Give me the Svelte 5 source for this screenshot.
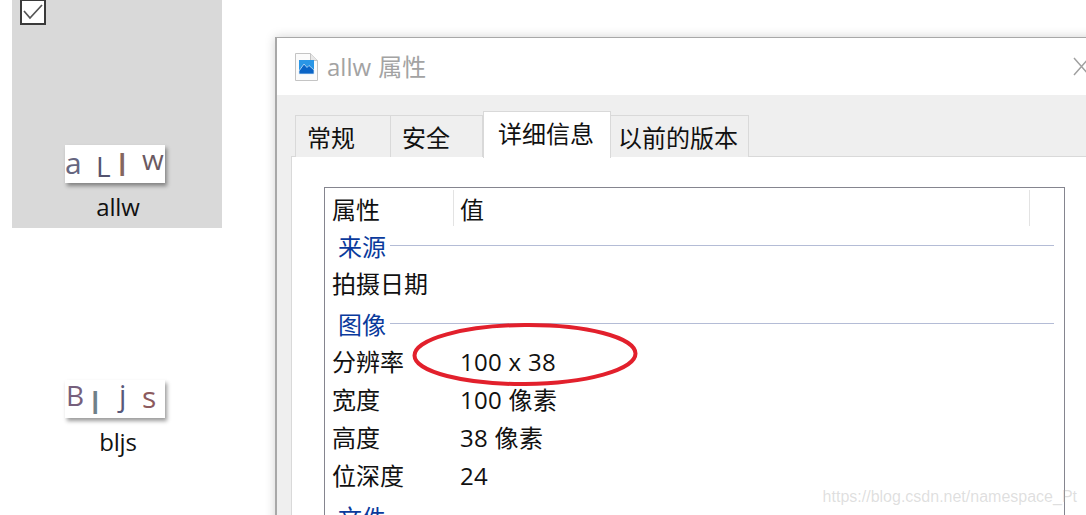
<script lang="ts">
	const tabs = [
		{ label: '常规', width: 96, pad: 11 },
		{ label: '安全', width: 92, pad: 11 },
		{ label: '详细信息', width: 128, pad: 14, active: true },
		{ label: '以前的版本', width: 138, pad: 7 }
	];

	const rows = [
		{ group: '来源' },
		{ name: '拍摄日期', value: '', tall: true },
		{ group: '图像' },
		{ name: '分辨率', value: '100 x 38' },
		{ name: '宽度', value: '100 像素' },
		{ name: '高度', value: '38 像素' },
		{ name: '位深度', value: '24' },
		{ group: '文件' }
	];

	const allw = [
		{ ch: 'a', x: 0, y: -1, size: 30, color: '#66667f' },
		{ ch: 'L', x: 31, y: 2, size: 28, color: '#53536f' },
		{ ch: 'l', x: 53, y: 1, size: 30, color: '#84665f' },
		{ ch: 'w', x: 77, y: -5, size: 28, color: '#6b5a62' }
	];

	const bljs = [
		{ ch: 'B', x: 1, y: -4, size: 28, color: '#76607c' },
		{ ch: 'l', x: 26, y: 4, size: 30, color: '#6f8088' },
		{ ch: 'j', x: 54, y: -4, size: 29, color: '#58587a' },
		{ ch: 's', x: 77, y: -2, size: 30, color: '#8c5a5e' }
	];
</script>

<div class="page">
	<div class="files">
		<div class="tile selected">
			<span class="check">
				<svg width="22" height="22" viewBox="0 0 22 22"><path d="M2 10 L8 17 L20 4" fill="none" stroke="#555" stroke-width="1.7" /></svg>
			</span>
			<div class="thumb">
				{#each allw as l}
					<span class="letter" class:bar={l.ch === 'l'} style="left: {l.x}px; top: {l.y}px; font-size: {l.size}px; color: {l.color}">{l.ch}</span>
				{/each}
			</div>
			<div class="file-name">allw</div>
		</div>
		<div class="tile">
			<div class="thumb">
				{#each bljs as l}
					<span class="letter" class:bar={l.ch === 'l'} style="left: {l.x}px; top: {l.y}px; font-size: {l.size}px; color: {l.color}">{l.ch}</span>
				{/each}
			</div>
			<div class="file-name">bljs</div>
		</div>
	</div>

	<div class="dialog">
		<div class="titlebar">
			<svg class="file-icon" width="23" height="28" viewBox="0 0 23 28">
				<path d="M0.5 0.5 H15.5 L22.5 7.5 V27.5 H0.5 Z" fill="#fbfbfb" stroke="#c4c4c4" />
				<path d="M15.5 0.5 V7.5 H22.5" fill="#e8e8e8" stroke="#c4c4c4" />
				<rect x="4" y="7" width="15" height="14" fill="#2a96e6" />
				<path d="M4 18 L9 11 L12 14.5 L14 12.5 L19 17 V21 H4 Z" fill="#0a64c6" stroke="#d8ecfa" stroke-width="0.7" />
			</svg>
			<span class="title">allw 属性</span>
			<svg class="close" width="16" height="20" viewBox="0 0 16 20"><path d="M1 1 L16 18 M16 1 L1 18" stroke="#a0a0a0" stroke-width="1.5" fill="none" /></svg>
		</div>

		<div class="body">
			<div class="tabs">
				{#each tabs as tab}
					<div class="tab" class:active={tab.active} style="width: {tab.width}px; padding-left: {tab.pad}px">{tab.label}</div>
				{/each}
			</div>
			<div class="panel">
				<div class="list">
					<div class="head">
						<div class="head-name">属性</div>
						<div class="head-value">值</div>
						<div class="head-rest"></div>
					</div>
					{#each rows as row}
						{#if row.group}
							<div class="group">
								<span>{row.group}</span>
								<i></i>
							</div>
						{:else}
							<div class="row" class:tall={row.tall}>
								<div class="row-name">{row.name}</div>
								<div class="row-value">{row.value}</div>
							</div>
						{/if}
					{/each}
				</div>
			</div>
		</div>

		<svg class="circle" width="232" height="68" viewBox="0 0 232 68">
			<ellipse cx="116" cy="34.5" rx="110.5" ry="29.5" transform="rotate(-0.5 116 34)" fill="none" stroke="#e2202c" stroke-width="4" />
		</svg>
	</div>

	<div class="watermark">https://blog.csdn.net/namespace_Pt</div>
</div>

<style>
	:global(body) {
		margin: 0;
		background: #fff;
	}

	.page {
		position: relative;
		display: flex;
		width: 1086px;
		height: 515px;
		overflow: hidden;
		background: #fff;
		font-family: 'Open Sans', 'Noto Sans CJK SC', sans-serif;
		color: #111;
	}

	.files {
		flex: none;
		width: 263px;
		padding-left: 12px;
		display: flex;
		flex-direction: column;
		gap: 7px;
	}

	.tile {
		position: relative;
		width: 210px;
		height: 228px;
		padding-top: 145px;
		box-sizing: border-box;
	}

	.tile.selected {
		background: #d9d9d9;
	}

	.check {
		position: absolute;
		left: 8px;
		top: -1px;
		width: 26px;
		height: 26px;
		box-sizing: border-box;
		border: 2px solid #3a3a3a;
		background: #fff;
		display: flex;
	}

	.thumb {
		position: relative;
		width: 100px;
		height: 38px;
		margin-left: 53px;
		background: #fff;
		box-shadow: 2px 3px 4px rgba(0, 0, 0, 0.4);
	}

	.letter {
		position: absolute;
		line-height: 38px;
		font-family: 'Open Sans', sans-serif;
	}

	.letter.bar {
		font-weight: 600;
	}

	.file-name {
		margin-top: 7px;
		text-align: center;
		margin-left: 2px;
		font-size: 24px;
		line-height: 33px;
		letter-spacing: -0.2px;
		color: #111;
	}

	.dialog {
		position: relative;
		flex: none;
		width: 880px;
		margin-top: 37px;
		height: 560px;
		box-sizing: border-box;
		border: 1px solid #a8a8a8;
		border-left-width: 2px;
		background: #efefef;
		box-shadow: 0 0 10px rgba(0, 0, 0, 0.18);
	}

	.titlebar {
		position: relative;
		height: 57px;
		background: #fff;
		display: flex;
		align-items: center;
		padding-left: 18px;
		gap: 9px;
	}

	.title {
		font-size: 24px;
		word-spacing: 1px;
		color: #a3a3a3;
		position: relative;
		top: -1px;
	}

	.close {
		position: absolute;
		left: 796px;
		top: 19px;
	}

	.body {
		padding: 16px 0 0 14px;
	}

	.tabs {
		display: flex;
		align-items: flex-end;
		height: 46px;
		padding-left: 4px;
		position: relative;
		z-index: 1;
	}

	.tab {
		box-sizing: border-box;
		height: 42px;
		border: 1px solid #d9d9d9;
		border-bottom: none;
		font-size: 24px;
		line-height: 44px;
		background: #efefef;
		white-space: nowrap;
	}

	.tab + .tab {
		border-left: none;
	}

	.tab.active {
		height: 47px;
		background: #fff;
		border-left: 1px solid #d9d9d9;
		margin-bottom: -1px;
	}

	.panel {
		background: #fff;
		border: 1px solid #d9d9d9;
		margin-top: -1px;
		padding: 30px 0 0 32px;
		height: 400px;
	}

	.list {
		width: 741px;
		box-sizing: border-box;
		height: 400px;
		border: 1px solid #85858f;
		padding: 2px 10px 0 6px;
	}

	.head {
		display: flex;
		height: 36px;
		font-size: 24px;
		line-height: 40px;
		margin-right: -10px;
	}

	.head-name {
		width: 121px;
		border-right: 1px solid #e3e3e3;
		padding-left: 1px;
	}

	.head-value {
		width: 569px;
		padding-left: 6px;
		border-right: 1px solid #e3e3e3;
	}

	.head-rest {
		flex: 1;
	}

	.group {
		display: flex;
		align-items: center;
		height: 38px;
		font-size: 24px;
		color: #0a3a9c;
		padding-left: 7px;
		gap: 4px;
	}

	.group:last-child {
		margin-top: 3px;
	}

	.group span {
		line-height: 38px;
		position: relative;
		top: 2px;
	}

	.group i {
		flex: 1;
		height: 1px;
		background: #b4bcd6;
	}

	.row {
		display: flex;
		height: 38px;
		font-size: 24px;
		line-height: 40px;
	}

	.row.tall {
		height: 40px;
	}

	.row-name {
		width: 129px;
		padding-left: 1px;
		box-sizing: border-box;
	}

	.row-value {
		letter-spacing: 0.3px;
	}

	.circle {
		position: absolute;
		left: 132px;
		top: 282px;
	}

	.watermark {
		position: absolute;
		right: 9px;
		top: 485px;
		font-family: 'Liberation Sans', sans-serif;
		font-size: 16px;
		line-height: 24px;
		color: rgba(170, 170, 170, 0.38);
	}
</style>
